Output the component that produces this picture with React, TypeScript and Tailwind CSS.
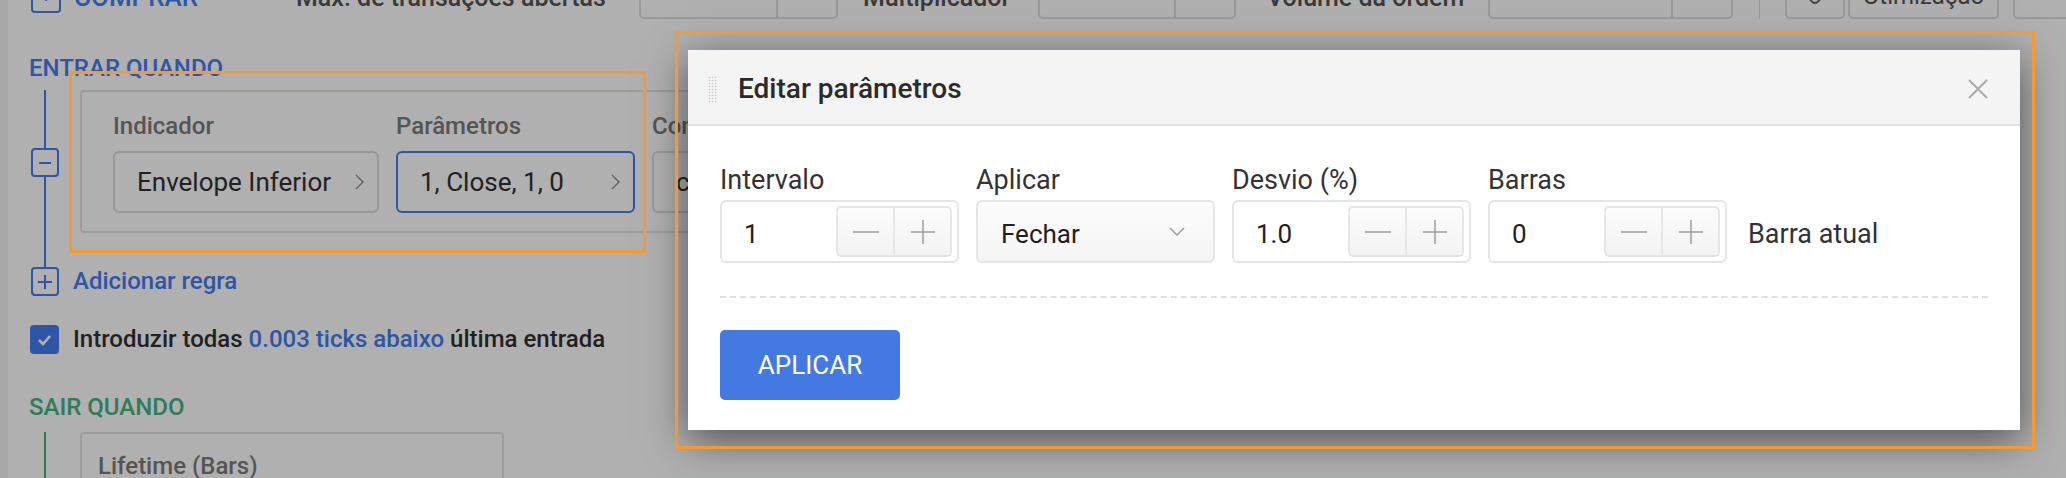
import React from 'react';

const BLUE = 'text-[#457cf0]';

const ChevronRight = () => (
  <svg width="9" height="16" viewBox="0 0 9 16" fill="none">
    <path d="M1 1l7 7-7 7" stroke="#8a8a8a" strokeWidth="1.4" />
  </svg>
);

const ChevronDown = () => (
  <svg width="16" height="9" viewBox="0 0 16 9" fill="none">
    <path d="M1 1l7 7 7-7" stroke="#9a9a9a" strokeWidth="1.4" />
  </svg>
);

const Stepper = () => (
  <div className="flex h-[51px] w-[116px] overflow-hidden rounded-[5px] border-2 border-[#e6e6e6] bg-gradient-to-b from-[#fcfcfc] to-[#f3f3f3]">
    <button className="flex flex-1 items-center justify-center border-r-2 border-[#e6e6e6]">
      <svg width="26" height="2" viewBox="0 0 26 2">
        <path d="M0 1h26" stroke="#9d9d9d" strokeWidth="1.5" />
      </svg>
    </button>
    <button className="flex flex-1 items-center justify-center">
      <svg width="24" height="24" viewBox="0 0 24 24">
        <path d="M12 0v24M0 12h24" stroke="#9d9d9d" strokeWidth="1.5" />
      </svg>
    </button>
  </div>
);

const NumberField = ({ label, value }: { label: string; value: string }) => (
  <div className="flex flex-col gap-[4px]">
    <span className="text-[27px] leading-[32px] text-[#333]">{label}</span>
    <div className="flex h-[63px] w-[239px] items-center justify-between rounded-[6px] border-2 border-[#e6e6e6] bg-white pl-[22px] pr-[5px]">
      <span className="pt-[5px] text-[26px] text-[#1f1f1f]">{value}</span>
      <Stepper />
    </div>
  </div>
);

const SelectField = ({ label, value }: { label: string; value: string }) => (
  <div className="flex flex-col gap-[4px]">
    <span className="text-[27px] leading-[32px] text-[#333]">{label}</span>
    <div className="flex h-[63px] w-[239px] items-center justify-between rounded-[6px] border-2 border-[#e6e6e6] bg-gradient-to-b from-[#fcfcfc] to-[#f5f5f5] pl-[23px] pr-[28px]">
      <span className="pt-[5px] text-[26px] text-[#1f1f1f]">{value}</span>
      <ChevronDown />
    </div>
  </div>
);

const TopBox = ({ width }: { width: string }) => (
  <div className={`flex h-[62px] ${width} rounded-[5px] border-2 border-[#dedede] bg-white`}>
    <div className="flex-1" />
    <div className="w-[60px] border-l-2 border-[#dedede]" />
  </div>
);

const GripDots = () => (
  <svg width="9" height="27" viewBox="0 0 9 27">
    {Array.from({ length: 9 }).map((_, r) =>
      [1.5, 4.5, 7.5].map((x) => <circle key={`${r}-${x}`} cx={x} cy={1.5 + r * 3} r="0.8" fill="#c4c4c4" />)
    )}
  </svg>
);

export default function App() {
  return (
    <div className="relative h-[478px] w-[2066px] overflow-hidden bg-white font-['Roboto',sans-serif]">
      {/* página por baixo do modal */}
      <div className="flex h-full">
        <div className="w-[8px] shrink-0 bg-[#f3f3f3]" />
        <div className="flex-1 pl-[21px]">
          {/* barra superior (cortada) */}
          <div className="-mt-[43px] flex h-[62px] items-end">
            <div className="flex w-[267px] items-end">
              <div className="mb-[6px] ml-[2px] flex h-[30px] w-[30px] items-end justify-center rounded-[4px] border-2 border-[#457cf0] pb-[10px]">
                <svg width="14" height="8" viewBox="0 0 14 8" fill="none">
                  <path d="M1 1l6 6 6-6" stroke="#457cf0" strokeWidth="2" />
                </svg>
              </div>
              <span className={`mb-[9px] ml-[13px] text-[26px] leading-none font-medium ${BLUE}`}>COMPRAR</span>
            </div>
            <span className="mb-[9px] w-[343px] text-[25px] leading-none font-medium text-[#555]">Máx. de transações abertas</span>
            <TopBox width="w-[199px]" />
            <span className="mb-[9px] ml-[25px] w-[175px] text-[25px] leading-none font-medium text-[#555]">Multiplicador</span>
            <TopBox width="w-[198px]" />
            <span className="mb-[9px] ml-[31px] w-[221px] text-[25px] leading-none font-medium text-[#555]">Volume da ordem</span>
            <TopBox width="w-[245px]" />
            <div className="ml-[26px] h-[62px] w-[1px] bg-[#dddddd]" />
            <div className="ml-[25px] flex h-[62px] w-[60px] items-end justify-center rounded-[5px] border-2 border-[#dedede] pb-[12px]">
              <svg width="20" height="12" viewBox="0 0 20 12" fill="none">
                <path d="M2 2c2 0 3 8 8 8s6-8 8-8" stroke="#666" strokeWidth="2" />
              </svg>
            </div>
            <div className="ml-[3px] flex h-[62px] w-[151px] items-end justify-center rounded-[5px] border-2 border-[#dedede] pb-[9px]">
              <span className="text-[24px] leading-none text-[#555]">Otimização</span>
            </div>
            <div className="ml-[14px] h-[62px] w-[100px] rounded-[5px] border-2 border-[#dedede]" />
          </div>

          {/* ENTRAR QUANDO */}
          <div className={`mt-[36px] text-[24px] leading-[26px] font-medium ${BLUE}`}>ENTRAR QUANDO</div>

          <div className="mt-[9px] flex">
            <div className="flex w-[32px] flex-col items-center">
              <div className="h-[58px] w-[2px] bg-[#457cf0]" />
              <div className="flex h-[29px] w-[28px] items-center justify-center rounded-[4px] border-2 border-[#457cf0]">
                <div className="h-[2px] w-[12px] bg-[#457cf0]" />
              </div>
              <div className="w-[2px] flex-1 bg-[#457cf0]" />
            </div>
            <div className="ml-[19px] pb-[34px]">
              <div className="flex h-[143px] w-[760px] gap-[17px] rounded-[4px] border-2 border-[#e2e2e2] pt-[20px] pl-[31px]">
                <div className="flex flex-col gap-[11px]">
                  <span className="text-[24px] leading-[28px] font-medium text-[#7b7b7b]">Indicador</span>
                  <div className="flex h-[62px] w-[266px] items-center justify-between rounded-[6px] border-2 border-[#dcdcdc] pl-[22px] pr-[13px]">
                    <span className="text-[26px] text-[#313131]">Envelope Inferior</span>
                    <ChevronRight />
                  </div>
                </div>
                <div className="flex flex-col gap-[11px]">
                  <span className="text-[24px] leading-[28px] font-medium text-[#7b7b7b]">Parâmetros</span>
                  <div className="flex h-[62px] w-[239px] items-center justify-between rounded-[6px] border-2 border-[#457cf0] pl-[22px] pr-[13px]">
                    <span className="text-[26px] text-[#313131]">1, Close, 1, 0</span>
                    <ChevronRight />
                  </div>
                </div>
                <div className="flex flex-col gap-[11px]">
                  <span className="text-[24px] leading-[28px] font-medium text-[#7b7b7b]">Condição</span>
                  <div className="flex h-[62px] w-[239px] items-center rounded-[6px] border-2 border-[#dcdcdc] pl-[22px]">
                    <span className="text-[26px] text-[#313131]">cruza abaixo</span>
                  </div>
                </div>
              </div>
            </div>
          </div>

          {/* Adicionar regra */}
          <div className="flex h-[29px] items-center">
            <div className="ml-[2px] flex h-[29px] w-[28px] items-center justify-center rounded-[4px] border-2 border-[#457cf0]">
              <svg width="14" height="14" viewBox="0 0 14 14">
                <path d="M7 0v14M0 7h14" stroke="#457cf0" strokeWidth="2" />
              </svg>
            </div>
            <span className={`ml-[14px] text-[24px] leading-[29px] font-medium ${BLUE}`}>Adicionar regra</span>
          </div>

          {/* checkbox */}
          <div className="mt-[29px] flex h-[29px] items-center">
            <div className="ml-[1px] flex h-[29px] w-[29px] items-center justify-center rounded-[4px] bg-[#457cf0]">
              <svg width="15" height="12" viewBox="0 0 15 12" fill="none">
                <path d="M2 6l4 4 7-8" stroke="white" strokeWidth="2.6" />
              </svg>
            </div>
            <span className="ml-[14px] text-[24px] leading-[29px] font-medium text-[#313131]">
              Introduzir todas <span className={BLUE}>0.003 ticks abaixo</span> última entrada
            </span>
          </div>

          {/* SAIR QUANDO */}
          <div className="mt-[40px] text-[24px] leading-[26px] font-medium text-[#43b582]">SAIR QUANDO</div>
          <div className="mt-[12px] flex">
            <div className="flex w-[32px] justify-center">
              <div className="h-[80px] w-[2px] bg-[#43b582]" />
            </div>
            <div className="ml-[19px] h-[80px] w-[424px] rounded-[4px] border-2 border-[#e2e2e2] pt-[18px] pl-[16px]">
              <span className="text-[24px] leading-[28px] font-medium text-[#7b7b7b]">Lifetime (Bars)</span>
            </div>
          </div>
        </div>
      </div>

      {/* overlay */}
      <div className="absolute inset-0 bg-black/[0.31]" />

      {/* modal */}
      <div className="absolute left-[688px] top-[50px] w-[1332px] bg-white shadow-[0_10px_40px_rgba(0,0,0,0.55)]">
        <div className="flex h-[76px] items-center border-b-2 border-[#e2e2e2] bg-[#f4f4f4] pt-[4px] pl-[20px] pr-[32px]">
          <GripDots />
          <span className="ml-[21px] text-[28px] font-medium text-[#2b2b2b]">Editar parâmetros</span>
          <button className="ml-auto">
            <svg width="20" height="20" viewBox="0 0 20 20">
              <path d="M1 1l18 18M19 1L1 19" stroke="#a8a8a8" strokeWidth="1.8" />
            </svg>
          </button>
        </div>
        <div className="px-[32px] pt-[38px] pb-[30px]">
          <div className="flex items-end gap-[17px]">
            <NumberField label="Intervalo" value="1" />
            <SelectField label="Aplicar" value="Fechar" />
            <NumberField label="Desvio (%)" value="1.0" />
            <NumberField label="Barras" value="0" />
            <div className="ml-[4px] flex h-[63px] items-center pt-[5px] text-[27px] text-[#333]">Barra atual</div>
          </div>
          <div className="mt-[33px] border-t-2 border-dashed border-[#e0e0e0]" />
          <button className="mt-[32px] h-[70px] w-[180px] rounded-[5px] bg-[#4479e1] text-[26px] text-white">APLICAR</button>
        </div>
      </div>

      {/* destaques */}
      <div className="pointer-events-none absolute left-[675px] top-[31px] h-[418px] w-[1360px] border-[3px] border-[#f39a33]" />
      <div className="pointer-events-none absolute left-[69px] top-[71px] h-[182px] w-[577px] border-[3px] border-[#f39a33]" />
    </div>
  );
}
